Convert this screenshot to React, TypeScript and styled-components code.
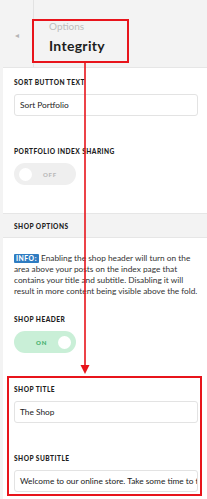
import styled, { createGlobalStyle } from "styled-components";

const GlobalStyle = createGlobalStyle`
  html, body {
    margin: 0;
    padding: 0;
    background: #ffffff;
  }
  body {
    font-family: Lato, "Open Sans", sans-serif;
    color: #333;
  }
`;

export default function App() {
  return (
    <Page>
      <GlobalStyle />
      <Header>
        <BackCol>
          <BackArrow>◂</BackArrow>
        </BackCol>
        <TitleBlock>
          <Crumb>Options</Crumb>
          <PageTitle>Integrity</PageTitle>
        </TitleBlock>
      </Header>

      <Field $gap={10}>
        <Label>Sort Button Text</Label>
        <Input>Sort Portfolio</Input>
      </Field>

      <Field $gap={31}>
        <Label>Portfolio Index Sharing</Label>
        <Toggle $on={false}>
          <Knob />
          <ToggleText $on={false}>OFF</ToggleText>
        </Toggle>
      </Field>

      <SectionBar>Shop Options</SectionBar>

      <Info>
        <Badge>INFO:</Badge> Enabling the shop header will turn on the area above your posts on the index page that contains your title and subtitle. Disabling it will result in more content being visible above the fold.
      </Info>

      <Field $gap={18}>
        <Label>Shop Header</Label>
        <Toggle $on>
          <ToggleText $on>ON</ToggleText>
          <Knob />
        </Toggle>
      </Field>

      <Field $gap={32}>
        <Label>Shop Title</Label>
        <Input>The Shop</Input>
      </Field>

      <Field $gap={31}>
        <Label>Shop Subtitle</Label>
        <Input>Welcome to our online store. Take some time to take a look around.</Input>
      </Field>

      <TitleMark />
      <Pointer>
        <svg width="12" height="312" viewBox="0 0 12 312">
          <line x1="6" y1="0" x2="6" y2="304" stroke="#e8141b" strokeWidth="1.6" />
          <path d="M1.5 302 L6 311 L10.5 302 Z" fill="#e8141b" />
        </svg>
      </Pointer>
      <FieldMark />
    </Page>
  );
}

const Page = styled.div`
  position: relative;
  width: 207px;
  height: 499px;
  overflow: hidden;
  background: #fff;
  border-left: 3px solid #f3f3f3;
  box-sizing: border-box;
`;

const Header = styled.div`
  display: flex;
  height: 68px;
  box-sizing: border-box;
  margin-left: -3px;
  background: #f3f3f3;
  border-bottom: 1px solid #e6e6e6;
`;

const BackCol = styled.div`
  flex: 0 0 34px;
  box-sizing: border-box;
  border-right: 1px solid #e2e2e2;
  display: flex;
  align-items: center;
  justify-content: center;
`;

const BackArrow = styled.span`
  font-size: 8px;
  color: #b5b5b5;
  margin-top: 2px;
`;

const TitleBlock = styled.div`
  padding: 20px 0 0 15px;
`;

const Crumb = styled.div`
  font-size: 10px;
  color: #bdbdbd;
  line-height: 12px;
`;

const PageTitle = styled.div`
  font-size: 14px;
  font-weight: 700;
  color: #1d1d1d;
  line-height: 17px;
  margin-top: 5px;
  letter-spacing: 0.3px;
`;

const Field = styled.div<{ $gap?: number }>`
  display: flex;
  flex-direction: column;
  gap: 8px;
  padding: ${({ $gap }) => ($gap ?? 8)}px 9px 0 11px;
`;

const Label = styled.div`
  font-size: 6.6px;
  font-weight: 900;
  text-transform: uppercase;
  letter-spacing: 0.45px;
  color: #1e1e1e;
  line-height: 8px;
`;

const Input = styled.div`
  height: 22px;
  box-sizing: border-box;
  border: 1px solid #e3e3e3;
  border-radius: 3px;
  padding: 0 5px;
  font-size: 8.3px;
  line-height: 20px;
  color: #222;
  white-space: nowrap;
  overflow: hidden;
`;

const Toggle = styled.div<{ $on: boolean }>`
  width: 62px;
  height: 22px;
  border-radius: 11px;
  background: ${({ $on }) => ($on ? "#c9efd7" : "#efefef")};
  display: flex;
  align-items: center;
  justify-content: space-between;
  padding: ${({ $on }) => ($on ? "0 5px 0 22px" : "0 19px 0 5px")};
  box-sizing: border-box;
`;

const Knob = styled.div`
  width: 13px;
  height: 13px;
  border-radius: 50%;
  background: #fff;
`;

const ToggleText = styled.span<{ $on: boolean }>`
  font-size: 6px;
  font-weight: 900;
  letter-spacing: 0.8px;
  color: ${({ $on }) => ($on ? "#3fae6a" : "#b8b8b8")};
`;

const SectionBar = styled.div`
  margin: 28px 0 0 -3px;
  height: 25px;
  box-sizing: border-box;
  background: #f3f3f3;
  border-top: 1px solid #e6e6e6;
  border-bottom: 1px solid #e6e6e6;
  padding-left: 14px;
  display: flex;
  align-items: center;
  font-size: 6.6px;
  font-weight: 900;
  letter-spacing: 0.45px;
  text-transform: uppercase;
  color: #1e1e1e;
`;

const Info = styled.p`
  margin: 15px 8px 0 11px;
  font-size: 8.3px;
  line-height: 11px;
  color: #333;
`;

const Badge = styled.span`
  display: inline-block;
  background: #2f7cc1;
  color: #fff;
  font-weight: 900;
  font-size: 6.8px;
  line-height: 9px;
  letter-spacing: 0.5px;
  padding: 0 2px;
  border-radius: 1px;
`;

const TitleMark = styled.div`
  position: absolute;
  left: 29px;
  top: 19px;
  width: 97px;
  height: 44px;
  border: 2px solid #e8141b;
  box-sizing: border-box;
`;

const Pointer = styled.div`
  position: absolute;
  left: 76px;
  top: 63px;
  width: 12px;
  height: 312px;
  svg {
    display: block;
  }
`;

const FieldMark = styled.div`
  position: absolute;
  left: 4px;
  top: 376px;
  width: 195px;
  height: 120px;
  border: 2px solid #e8141b;
  box-sizing: border-box;
`;
